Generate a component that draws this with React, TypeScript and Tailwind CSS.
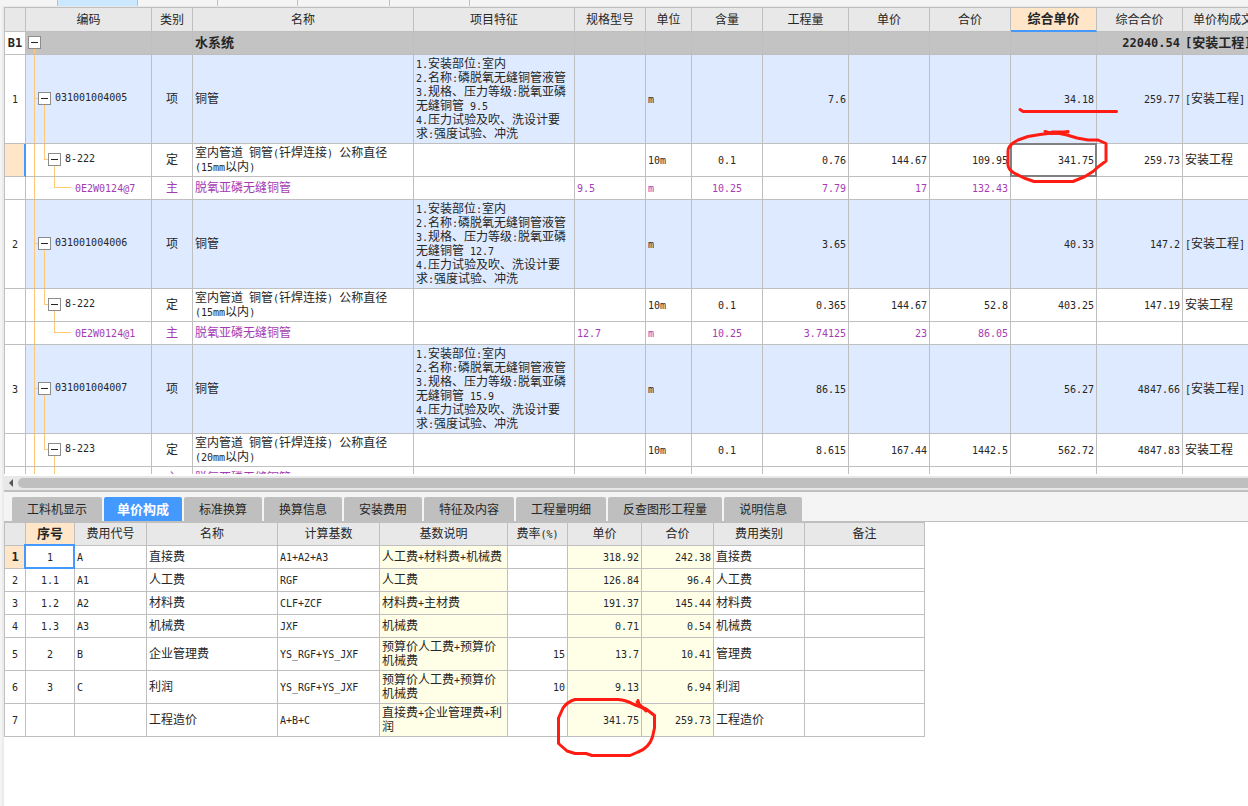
import type { ReactNode } from 'react'

type Align = 'left' | 'center' | 'right'
type RowKind = 'section' | 'item' | 'quota' | 'material'

interface CostRow {
  no: string
  kind: RowKind
  code: string
  type: string
  name: string
  feature?: string
  spec?: string
  unit?: string
  content?: string
  quantity?: string
  price?: string
  total?: string
  unitPrice?: string
  sumPrice?: string
  file?: string
  active?: boolean
}

const ALIGN: Record<Align, string> = {
  left: 'text-left',
  center: 'text-center',
  right: 'text-right',
}

const COST_COLUMNS: { title: string; width: string; active?: boolean }[] = [
  { title: '编码', width: 'w-[126px]' },
  { title: '类别', width: 'w-[41px]' },
  { title: '名称', width: 'w-[221px]' },
  { title: '项目特征', width: 'w-[161px]' },
  { title: '规格型号', width: 'w-[71px]' },
  { title: '单位', width: 'w-[46px]' },
  { title: '含量', width: 'w-[71px]' },
  { title: '工程量', width: 'w-[86px]' },
  { title: '单价', width: 'w-[81px]' },
  { title: '合价', width: 'w-[81px]' },
  { title: '综合单价', width: 'w-[86px]', active: true },
  { title: '综合合价', width: 'w-[86px]' },
  { title: '单价构成文件', width: 'w-[93px]' },
]

const feature = (size: string) =>
  `1.安装部位:室内\n2.名称:磷脱氧无缝铜管液管\n3.规格、压力等级:脱氧亚磷\n无缝铜管 ${size}\n4.压力试验及吹、洗设计要\n求:强度试验、冲洗`

const COST_ROWS: CostRow[] = [
  { no: 'B1', kind: 'section', code: '', type: '', name: '水系统', sumPrice: '22040.54', file: '[安装工程]' },
  { no: '1', kind: 'item', code: '031001004005', type: '项', name: '铜管', feature: feature('9.5'), unit: 'm', quantity: '7.6', unitPrice: '34.18', sumPrice: '259.77', file: '[安装工程]' },
  { no: '', kind: 'quota', code: '8-222', type: '定', name: '室内管道 铜管(钎焊连接) 公称直径\n(15mm以内)', unit: '10m', content: '0.1', quantity: '0.76', price: '144.67', total: '109.95', unitPrice: '341.75', sumPrice: '259.73', file: '安装工程', active: true },
  { no: '', kind: 'material', code: '0E2W0124@7', type: '主', name: '脱氧亚磷无缝铜管', spec: '9.5', unit: 'm', content: '10.25', quantity: '7.79', price: '17', total: '132.43' },
  { no: '2', kind: 'item', code: '031001004006', type: '项', name: '铜管', feature: feature('12.7'), unit: 'm', quantity: '3.65', unitPrice: '40.33', sumPrice: '147.2', file: '[安装工程]' },
  { no: '', kind: 'quota', code: '8-222', type: '定', name: '室内管道 铜管(钎焊连接) 公称直径\n(15mm以内)', unit: '10m', content: '0.1', quantity: '0.365', price: '144.67', total: '52.8', unitPrice: '403.25', sumPrice: '147.19', file: '安装工程' },
  { no: '', kind: 'material', code: '0E2W0124@1', type: '主', name: '脱氧亚磷无缝铜管', spec: '12.7', unit: 'm', content: '10.25', quantity: '3.74125', price: '23', total: '86.05' },
  { no: '3', kind: 'item', code: '031001004007', type: '项', name: '铜管', feature: feature('15.9'), unit: 'm', quantity: '86.15', unitPrice: '56.27', sumPrice: '4847.66', file: '[安装工程]' },
  { no: '', kind: 'quota', code: '8-223', type: '定', name: '室内管道 铜管(钎焊连接) 公称直径\n(20mm以内)', unit: '10m', content: '0.1', quantity: '8.615', price: '167.44', total: '1442.5', unitPrice: '562.72', sumPrice: '4847.83', file: '安装工程' },
  { no: '', kind: 'material', code: '0E2W0124@8', type: '主', name: '脱氧亚磷无缝铜管', spec: '15.9', unit: 'm', content: '10.25', quantity: '88.30375', price: '28', total: '2472.51' },
]

const ROW_STYLE: Record<RowKind, string> = {
  section: 'h-[23px] bg-[#c3c3c3] text-[13px] font-bold',
  item: 'h-[89px] bg-[#deeaff]',
  quota: 'h-[33px]',
  material: 'h-[23px] text-[#a63cb4]',
}

const TABS = ['工料机显示', '单价构成', '标准换算', '换算信息', '安装费用', '特征及内容', '工程量明细', '反查图形工程量', '说明信息']

const FEE_COLUMNS: { title: string; width: string; align: Align; tint?: boolean }[] = [
  { title: '序号', width: 'w-[49px]', align: 'center' },
  { title: '费用代号', width: 'w-[72px]', align: 'left' },
  { title: '名称', width: 'w-[131px]', align: 'left' },
  { title: '计算基数', width: 'w-[102px]', align: 'left' },
  { title: '基数说明', width: 'w-[128px]', align: 'left', tint: true },
  { title: '费率(%)', width: 'w-[60px]', align: 'right' },
  { title: '单价', width: 'w-[74px]', align: 'right', tint: true },
  { title: '合价', width: 'w-[72px]', align: 'right', tint: true },
  { title: '费用类别', width: 'w-[91px]', align: 'left' },
  { title: '备注', width: 'w-[120px]', align: 'left' },
]

const FEE_ROWS: string[][] = [
  ['1', 'A', '直接费', 'A1+A2+A3', '人工费+材料费+机械费', '', '318.92', '242.38', '直接费', ''],
  ['1.1', 'A1', '人工费', 'RGF', '人工费', '', '126.84', '96.4', '人工费', ''],
  ['1.2', 'A2', '材料费', 'CLF+ZCF', '材料费+主材费', '', '191.37', '145.44', '材料费', ''],
  ['1.3', 'A3', '机械费', 'JXF', '机械费', '', '0.71', '0.54', '机械费', ''],
  ['2', 'B', '企业管理费', 'YS_RGF+YS_JXF', '预算价人工费+预算价\n机械费', '15', '13.7', '10.41', '管理费', ''],
  ['3', 'C', '利润', 'YS_RGF+YS_JXF', '预算价人工费+预算价\n机械费', '10', '9.13', '6.94', '利润', ''],
  ['', '', '工程造价', 'A+B+C', '直接费+企业管理费+利\n润', '', '341.75', '259.73', '工程造价', ''],
]

// Latin runs are set in a mono face at half the width of a Chinese character
function Mixed({ text, bold }: { text: string; bold?: boolean }) {
  return (
    <>
      {text.split(/([\x20-\x7e]+)/).filter(Boolean).map((part, i) =>
        /^[\x20-\x7e]/.test(part)
          ? <span key={i} className={`font-['DejaVu_Sans_Mono',monospace] leading-none ${bold ? 'text-[12px]' : 'text-[10px]'}`}>{part}</span>
          : part
      )}
    </>
  )
}

function Cell({ text = '', align = 'left', className = '', bold, children }: {
  text?: string
  align?: Align
  className?: string
  bold?: boolean
  children?: ReactNode
}) {
  return (
    <td className={`border-r border-b border-[#bfbfbf] px-[2px] pt-0 pb-[2px] whitespace-pre ${ALIGN[align]} ${className}`}>
      <Mixed text={text} bold={bold} />
      {children}
    </td>
  )
}

function Toggle() {
  return (
    <button aria-label="折叠" className="flex size-[13px] shrink-0 items-center justify-center border border-[#8c8c8c] bg-white">
      <span className="h-px w-[7px] bg-[#262626]" />
    </button>
  )
}

function TreeCell({ row }: { row: CostRow }) {
  const line = 'absolute bg-[#ffc878]'
  const mid = 'top-[calc(50%-1px)]'
  return (
    <td className="relative border-r border-b border-[#bfbfbf] px-0 pt-0 pb-[2px]">
      {row.kind === 'section' && <i className={`${line} top-[17px] bottom-0 left-[8px] w-px`} />}
      {row.kind !== 'section' && <i className={`${line} top-0 bottom-0 left-[8px] w-px`} />}
      {row.kind === 'item' && (
        <>
          <i className={`${line} ${mid} left-[9px] h-px w-[3px]`} />
          <i className={`${line} ${mid} bottom-0 left-[18px] w-px`} />
        </>
      )}
      {row.kind === 'quota' && (
        <>
          <i className={`${line} top-0 bottom-1/2 left-[18px] w-px`} />
          <i className={`${line} ${mid} left-[18px] h-px w-[4px]`} />
          <i className={`${line} ${mid} bottom-0 left-[28px] w-px`} />
        </>
      )}
      {row.kind === 'material' && (
        <>
          <i className={`${line} top-0 bottom-1/2 left-[28px] w-px`} />
          <i className={`${line} ${mid} left-[28px] h-px w-[17px]`} />
        </>
      )}
      {row.kind === 'section' && <div className="relative flex pl-[2px]"><Toggle /></div>}
      {row.kind === 'item' && <div className="relative flex items-center gap-1 pl-[12px]"><Toggle /><Mixed text={row.code} /></div>}
      {row.kind === 'quota' && <div className="relative flex items-center gap-1 pl-[22px]"><Toggle /><Mixed text={row.code} /></div>}
      {row.kind === 'material' && <div className="pl-[49px]"><Mixed text={row.code} /></div>}
    </td>
  )
}

function CostTable() {
  return (
    <table className="w-[1272px] table-fixed border-separate border-spacing-0 border-t border-l border-[#bfbfbf]">
      <thead>
        <tr className="h-6 bg-[#e8e8e8]">
          <th className="w-[21px] border-r border-b border-[#bfbfbf] p-0" />
          {COST_COLUMNS.map(col => (
            <th
              key={col.title}
              className={`${col.width} border-r px-0 pt-0 pb-[2px] ${col.active
                ? 'border-b-2 border-r-[#bfbfbf] border-b-[#4499ff] bg-[#ffe6c8] text-[13px] font-bold'
                : 'border-b border-[#bfbfbf] font-normal'}`}
            >
              {col.title}
            </th>
          ))}
        </tr>
      </thead>
      <tbody>
        {COST_ROWS.map((row, i) => {
          const bold = row.kind === 'section'
          return (
            <tr key={i} className={ROW_STYLE[row.kind]}>
              {row.active
                ? <td className="border-r-2 border-b border-r-[#4499ff] border-b-[#bfbfbf] bg-[#ffe6c8] p-0" />
                : <Cell text={row.no} align="center" bold={bold} className="bg-white text-[#262626]" />}
              <TreeCell row={row} />
              <Cell text={row.type} align="center" />
              <Cell text={row.name} />
              <Cell text={row.feature} />
              <Cell text={row.spec} />
              <Cell text={row.unit} />
              <Cell text={row.content} align="center" />
              <Cell text={row.quantity} align="right" />
              <Cell text={row.price} align="right" />
              <Cell text={row.total} align="right" />
              <Cell text={row.unitPrice} align="right" className="relative">
                {row.active && <span className="absolute -inset-px border-2 border-[#808080]" />}
              </Cell>
              <Cell text={row.sumPrice} align="right" bold={bold} />
              <Cell text={row.file} bold={bold} />
            </tr>
          )
        })}
      </tbody>
    </table>
  )
}

function FeeTable() {
  return (
    <table className="w-[921px] table-fixed border-separate border-spacing-0 border-t border-l border-[#bfbfbf]">
      <thead>
        <tr className="h-[23px] bg-[#e8e8e8]">
          <th className="w-[21px] border-r border-b border-[#bfbfbf] p-0" />
          {FEE_COLUMNS.map((col, i) => (
            <th
              key={col.title}
              className={`${col.width} border-r border-b border-[#bfbfbf] px-0 pt-0 pb-[2px] ${i === 0 ? 'bg-[#ffe6c8] text-[13px] font-bold' : 'font-normal'}`}
            >
              <Mixed text={col.title} />
            </th>
          ))}
        </tr>
      </thead>
      <tbody>
        {FEE_ROWS.map((row, r) => (
          <tr key={r} className={r < 4 ? 'h-[23px]' : 'h-[33px]'}>
            <Cell text={String(r + 1)} align="center" bold={r === 0} className={r === 0 ? 'bg-[#ffe6c8] font-bold' : ''} />
            {row.map((text, c) => (
              <Cell
                key={c}
                text={text}
                align={FEE_COLUMNS[c].align}
                className={`${FEE_COLUMNS[c].tint ? 'bg-[#ffffe8]' : ''} ${r === 0 && c === 0 ? 'relative' : ''}`}
              >
                {r === 0 && c === 0 && <span className="absolute -top-[2px] -right-px -bottom-px -left-[2px] border-2 border-[#4499ff]" />}
              </Cell>
            ))}
          </tr>
        ))}
      </tbody>
    </table>
  )
}

function TopStrip() {
  const line = 'border-r border-[#bfbfbf]'
  return (
    <div className="flex h-[6px] bg-[#f4f4f4]">
      <div className={`w-[58px] ${line}`} />
      <div className={`w-[80px] bg-[#cce8ff] ${line}`} />
      <div className={`w-[80px] ${line}`} />
      <div className={`w-[80px] ${line}`} />
      <div className={`w-[92px] ${line}`} />
      <div className={`w-[80px] ${line}`} />
    </div>
  )
}

// Red pen marks drawn over both grids
function PenMarks() {
  return (
    <svg className="pointer-events-none absolute top-0 left-0" width="1248" height="806" fill="none" stroke="#ff1c12" strokeWidth="3" strokeLinecap="round" strokeLinejoin="round">
      <path d="M1020 109.500l3 2h93.500" />
      <path d="M1045 131.500l7 2 16-2M1052 132h16" />
      <path d="M1052 133L1040 134.500 1028 136.500 1018 140Q1008 145 1008 151V165Q1008 169 1014 173L1024 178 1034 181.500H1073L1085 176.500 1093 171.500 1098 167 1106 161V143.500L1098 140H1088L1077 138 1067 135Q1060 133 1052 133" />
      <path d="M575 699.500H618Q626 700 634 704.500L646 709 654.500 715.500V728L652.500 737Q649 748 638 752L630 755.500H592L586 753.500H575L567 751 558.500 743.500V718L563 708Q567 702 575 699.500" />
      <path d="M638 700.500l1 4 7 6M637 702l9 9" />
    </svg>
  )
}

export default function App() {
  return (
    <div className="relative flex min-h-screen flex-col overflow-hidden bg-[#f4f4f4] font-['Noto_Sans_CJK_SC',sans-serif] text-[12px] leading-[14px] text-[#262626]">
      <TopStrip />
      <div className="ml-[2px] flex flex-1 flex-col border-t border-l-2 border-t-[#e8e8e8] border-l-[#ebebeb]">
        <div className="h-[469px] overflow-hidden bg-white">
          <div className="h-[467px] overflow-hidden">
            <CostTable />
          </div>
        </div>

        <div className="flex h-[14px] items-center bg-[#e8e8e8] pl-[5px]">
          <svg width="4" height="8" viewBox="0 0 4 8" fill="#555">
            <path d="M4 0v8L0 4z" />
          </svg>
          <div className="ml-[5px] h-[10px] flex-1 rounded-l-full bg-[#bfbfbf]" />
        </div>

        <div role="tablist" className="flex h-8 items-end gap-[2px] border-t-2 border-b border-[#bfbfbf] pl-2">
          {TABS.map(tab => (
            <button
              key={tab}
              role="tab"
              aria-selected={tab === '单价构成'}
              className={`h-6 rounded-t-[2px] ${tab === '单价构成' ? 'bg-[#4499ff] px-[13px] text-[13px] font-bold text-white' : 'bg-[#bfbfbf] px-[15px]'}`}
            >
              {tab}
            </button>
          ))}
        </div>

        <div className="flex-1 bg-white">
          <FeeTable />
        </div>
      </div>
      <PenMarks />
    </div>
  )
}
